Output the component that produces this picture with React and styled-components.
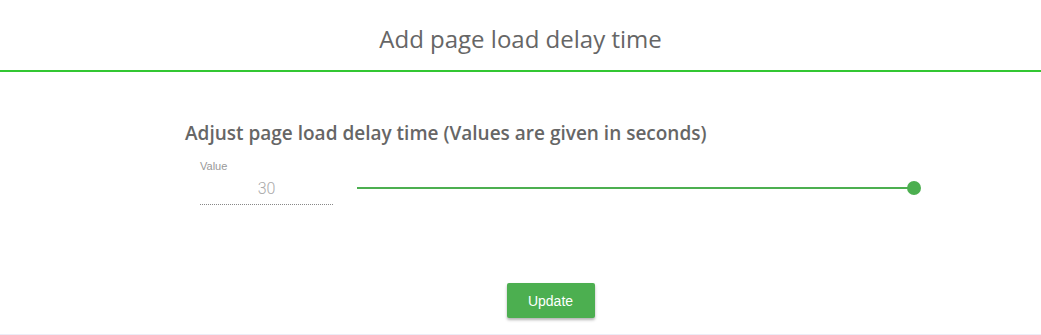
import React, { useState } from "react";
import styled, { createGlobalStyle } from "styled-components";

const GlobalStyle = createGlobalStyle`
  body {
    margin: 0;
    background: #fff;
    font-family: "Open Sans", "Noto Sans", sans-serif;
  }
`;

const Page = styled.div`
  height: 334px;
  border-bottom: 1px solid #ececf6;
  display: flex;
  flex-direction: column;
`;

const Header = styled.div`
  height: 72px;
  box-sizing: border-box;
  padding-top: 7px;
  border-bottom: 2px solid #33c733;
  display: flex;
  align-items: center;
  justify-content: center;
`;

const Title = styled.h1`
  margin: 0;
  font-family: "Open Sans", sans-serif;
  font-weight: 400;
  font-size: 24px;
  color: #666;
`;

const Body = styled.div`
  padding: 48px 120px 0 185px;
  display: flex;
  flex-direction: column;
`;

const Heading = styled.h2`
  margin: 0;
  font-family: "Open Sans", sans-serif;
  font-weight: 600;
  font-size: 19px;
  line-height: 26px;
  color: #666;
`;

const Row = styled.div`
  display: flex;
  align-items: center;
  gap: 24px;
  margin-top: 13px;
  padding-left: 15px;
`;

const Field = styled.label`
  width: 133px;
  display: flex;
  flex-direction: column;
`;

const FieldLabel = styled.span`
  font-family: "Liberation Sans", Arial, sans-serif;
  font-size: 11px;
  line-height: 14px;
  color: #999;
`;

const ValueInput = styled.input`
  border: none;
  border-bottom: 1px dotted #888;
  outline: none;
  text-align: center;
  font-family: Roboto, sans-serif;
  font-weight: 300;
  font-size: 16px;
  color: #aaa;
  padding: 6px 0 6px;
  background: transparent;
`;

const Track = styled.div`
  position: relative;
  flex: 1;
  height: 2px;
  background: #4caf50;
  margin-top: 12px;
  margin-right: 7px;
`;

const Thumb = styled.span`
  position: absolute;
  top: 50%;
  width: 14px;
  height: 14px;
  border-radius: 50%;
  background: #4caf50;
  transform: translate(-50%, -50%);
`;

const Footer = styled.div`
  display: flex;
  justify-content: center;
  padding-left: 60px;
  margin-top: 78px;
`;

const Button = styled.button`
  width: 88px;
  height: 35px;
  border: none;
  border-radius: 2px;
  background: #4caf50;
  color: #fff;
  font-family: "Liberation Sans", Arial, sans-serif;
  font-size: 14px;
  box-shadow: 0 2px 3px rgba(0, 0, 0, 0.3);
  cursor: pointer;
`;

const App = () => {
  const [value] = useState(30);
  const max = 30;
  return (
    <Page>
      <GlobalStyle />
      <Header>
        <Title>Add page load delay time</Title>
      </Header>
      <Body>
        <Heading>Adjust page load delay time (Values are given in seconds)</Heading>
        <Row>
          <Field>
            <FieldLabel>Value</FieldLabel>
            <ValueInput type="text" defaultValue={value} />
          </Field>
          <Track>
            <Thumb style={{ left: `${(value / max) * 100}%` }} />
          </Track>
        </Row>
      </Body>
      <Footer>
        <Button>Update</Button>
      </Footer>
    </Page>
  );
};

export default App;
